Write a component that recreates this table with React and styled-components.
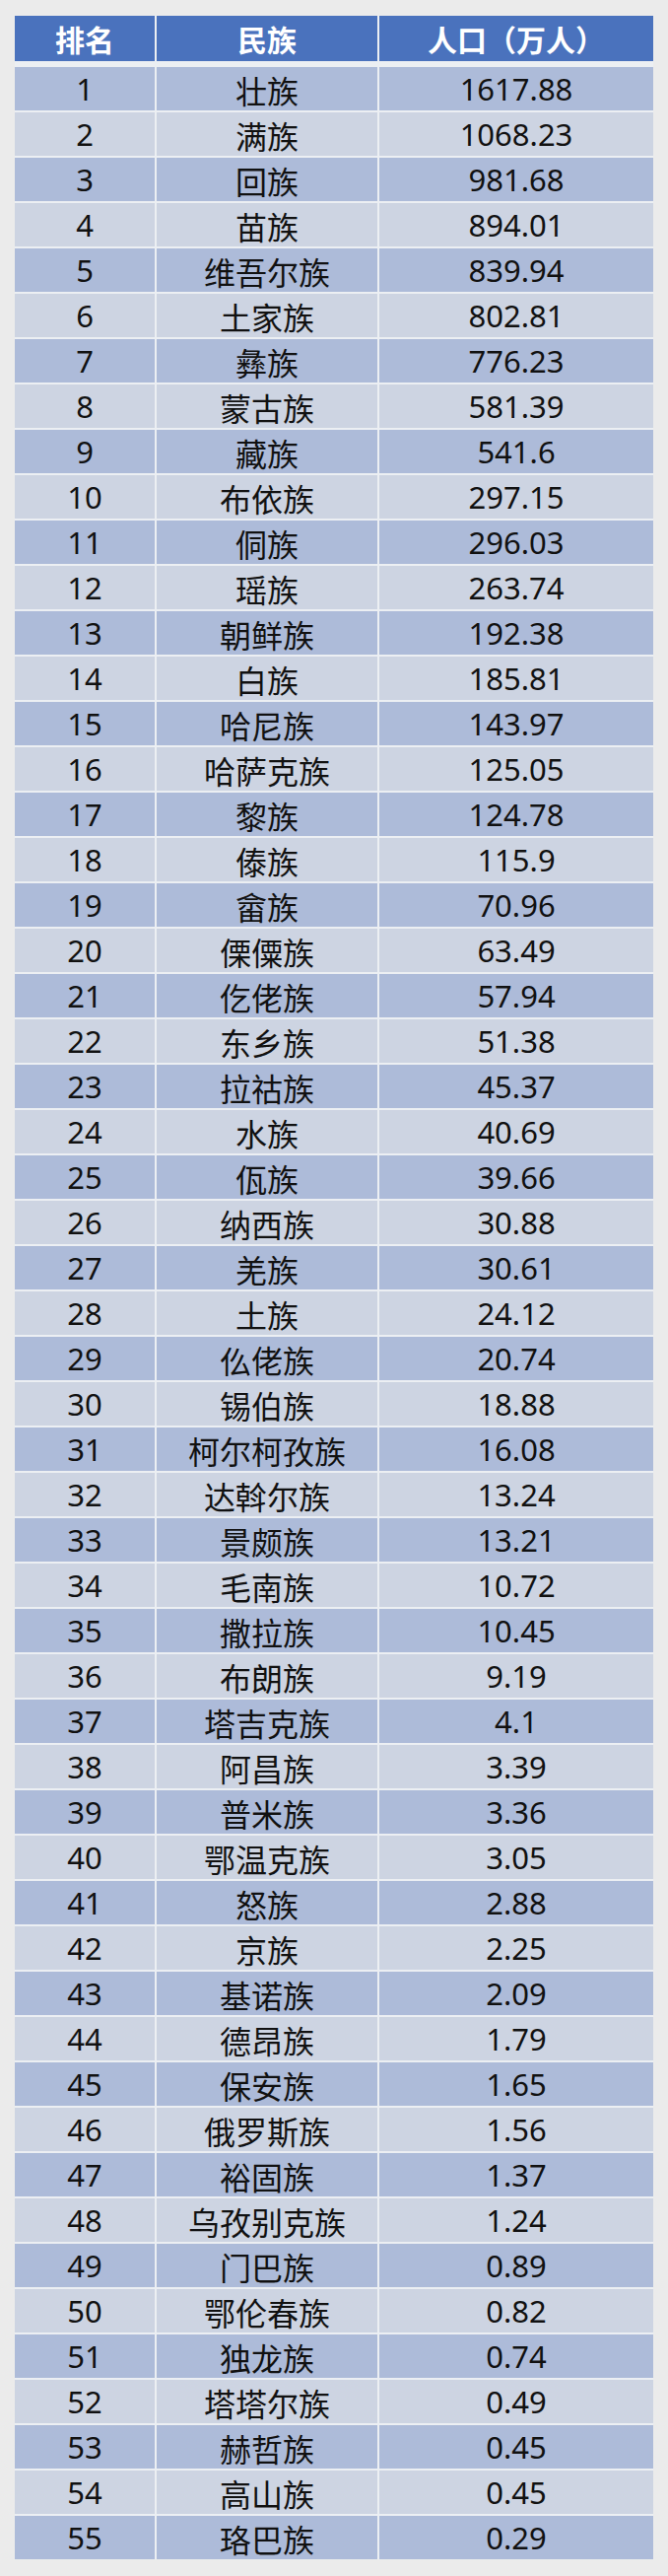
import React from "react";
import styled, { createGlobalStyle } from "styled-components";

const data = [
  ["壮族", "1617.88"],
  ["满族", "1068.23"],
  ["回族", "981.68"],
  ["苗族", "894.01"],
  ["维吾尔族", "839.94"],
  ["土家族", "802.81"],
  ["彝族", "776.23"],
  ["蒙古族", "581.39"],
  ["藏族", "541.6"],
  ["布依族", "297.15"],
  ["侗族", "296.03"],
  ["瑶族", "263.74"],
  ["朝鲜族", "192.38"],
  ["白族", "185.81"],
  ["哈尼族", "143.97"],
  ["哈萨克族", "125.05"],
  ["黎族", "124.78"],
  ["傣族", "115.9"],
  ["畲族", "70.96"],
  ["傈僳族", "63.49"],
  ["仡佬族", "57.94"],
  ["东乡族", "51.38"],
  ["拉祜族", "45.37"],
  ["水族", "40.69"],
  ["佤族", "39.66"],
  ["纳西族", "30.88"],
  ["羌族", "30.61"],
  ["土族", "24.12"],
  ["仫佬族", "20.74"],
  ["锡伯族", "18.88"],
  ["柯尔柯孜族", "16.08"],
  ["达斡尔族", "13.24"],
  ["景颇族", "13.21"],
  ["毛南族", "10.72"],
  ["撒拉族", "10.45"],
  ["布朗族", "9.19"],
  ["塔吉克族", "4.1"],
  ["阿昌族", "3.39"],
  ["普米族", "3.36"],
  ["鄂温克族", "3.05"],
  ["怒族", "2.88"],
  ["京族", "2.25"],
  ["基诺族", "2.09"],
  ["德昂族", "1.79"],
  ["保安族", "1.65"],
  ["俄罗斯族", "1.56"],
  ["裕固族", "1.37"],
  ["乌孜别克族", "1.24"],
  ["门巴族", "0.89"],
  ["鄂伦春族", "0.82"],
  ["独龙族", "0.74"],
  ["塔塔尔族", "0.49"],
  ["赫哲族", "0.45"],
  ["高山族", "0.45"],
  ["珞巴族", "0.29"],
];

const GlobalStyle = createGlobalStyle`
  body {
    margin: 0;
    background: #ebebeb;
    font-family: "Noto Sans", "Noto Sans CJK SC", sans-serif;
  }
`;

const Page = styled.div`
  padding: 16px 15px 17px;
`;

const Table = styled.div`
  display: flex;
  flex-direction: column;
  gap: 2px;
  background: #eceff3;
`;

const Row = styled.div`
  display: grid;
  grid-template-columns: 142px 224px 1fr;
  column-gap: 2px;
  height: ${(p) => (p.$head ? "46px" : "44px")};
  margin-bottom: ${(p) => (p.$head ? "4px" : "0")};
`;

const Cell = styled.div`
  display: flex;
  align-items: center;
  justify-content: center;
  background: ${(p) => (p.$odd ? "#adbbd9" : "#cdd4e2")};
  color: #111;
  font-size: 31px;
  line-height: 1;
  padding-top: 1px;
`;

const NameCell = styled(Cell)`
  font-family: "Noto Sans CJK SC", sans-serif;
  font-size: 32px;
`;

const HeadCell = styled.div`
  display: flex;
  align-items: center;
  justify-content: center;
  background: #4a72bd;
  color: #fff;
  font-family: "Noto Sans CJK SC", sans-serif;
  font-weight: 700;
  font-size: 30px;
  line-height: 1;
`;

export default function App() {
  return (
    <Page>
      <GlobalStyle />
      <Table>
        <Row $head>
          <HeadCell>排名</HeadCell>
          <HeadCell>民族</HeadCell>
          <HeadCell>人口（万人）</HeadCell>
        </Row>
        {data.map(([name, pop], i) => {
          const odd = i % 2 === 0;
          return (
            <Row key={name + i}>
              <Cell $odd={odd}>{i + 1}</Cell>
              <NameCell $odd={odd}>{name}</NameCell>
              <Cell $odd={odd}>{pop}</Cell>
            </Row>
          );
        })}
      </Table>
    </Page>
  );
}
